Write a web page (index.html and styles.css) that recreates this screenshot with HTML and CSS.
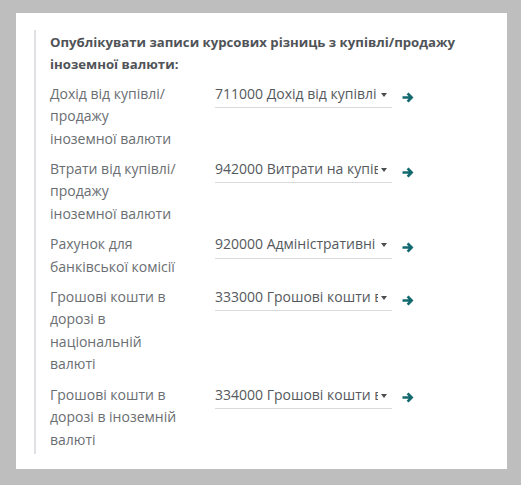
FILE: index.html
```html
<!DOCTYPE html>
<html lang="uk">
<head>
<meta charset="utf-8">
<link rel="stylesheet" href="styles.css">
</head>
<body>
<div class="panel">
  <div class="group">
    <div class="title">Опублікувати записи курсових різниць з купівлі/продажу<br>іноземної валюти:</div>
    <div class="rows">
      <div class="label">Дохід від купівлі/<br>продажу<br>іноземної валюти</div>
      <div class="field"><span class="val">711000 Дохід від купівлі</span><span class="caret"></span></div>
      <div class="link"><svg viewBox="0 0 12 11" width="12" height="11"><path d="M0.5 5.5H9.6M5.6 1.4L9.6 5.5L5.6 9.6" fill="none" stroke="currentColor" stroke-width="2.7" stroke-linejoin="miter" stroke-linecap="butt"/></svg></div>

      <div class="label">Втрати від купівлі/<br>продажу<br>іноземної валюти</div>
      <div class="field"><span class="val">942000 Витрати на купівлю</span><span class="caret"></span></div>
      <div class="link"><svg viewBox="0 0 12 11" width="12" height="11"><path d="M0.5 5.5H9.6M5.6 1.4L9.6 5.5L5.6 9.6" fill="none" stroke="currentColor" stroke-width="2.7" stroke-linejoin="miter" stroke-linecap="butt"/></svg></div>

      <div class="label">Рахунок для<br>банківської комісії</div>
      <div class="field"><span class="val">920000 Адміністративні витрати</span><span class="caret"></span></div>
      <div class="link"><svg viewBox="0 0 12 11" width="12" height="11"><path d="M0.5 5.5H9.6M5.6 1.4L9.6 5.5L5.6 9.6" fill="none" stroke="currentColor" stroke-width="2.7" stroke-linejoin="miter" stroke-linecap="butt"/></svg></div>

      <div class="label">Грошові кошти в<br>дорозі в<br>національній<br>валюті</div>
      <div class="field"><span class="val">333000 Грошові кошти в дорозі</span><span class="caret"></span></div>
      <div class="link"><svg viewBox="0 0 12 11" width="12" height="11"><path d="M0.5 5.5H9.6M5.6 1.4L9.6 5.5L5.6 9.6" fill="none" stroke="currentColor" stroke-width="2.7" stroke-linejoin="miter" stroke-linecap="butt"/></svg></div>

      <div class="label">Грошові кошти в<br>дорозі в іноземній<br>валюті</div>
      <div class="field"><span class="val">334000 Грошові кошти в дорозі</span><span class="caret"></span></div>
      <div class="link"><svg viewBox="0 0 12 11" width="12" height="11"><path d="M0.5 5.5H9.6M5.6 1.4L9.6 5.5L5.6 9.6" fill="none" stroke="currentColor" stroke-width="2.7" stroke-linejoin="miter" stroke-linecap="butt"/></svg></div>
    </div>
  </div>
</div>
</body>
</html>
```

FILE: styles.css
```css
html, body {
  margin: 0;
  padding: 0;
  background: #bebebe;
}
body {
  padding: 13px 14px 16px 16px;
  font-family: "Open Sans", "Noto Sans", sans-serif;
  font-size: 14px;
  line-height: 22.4px;
  color: #666a6e;
}
.panel {
  background: #ffffff;
  width: 491px;
  height: 456px;
  box-sizing: border-box;
  padding: 17px 0 0 18px;
}
.group {
  border-left: 2px solid #dfe1e4;
  padding: 1px 0 0 14px;
  height: 424px;
  box-sizing: border-box;
}
.title {
  font-size: 13.2px;
  font-weight: 700;
  color: #4f5357;
  margin-bottom: 7px;
}
.rows {
  display: grid;
  grid-template-columns: 165px 177px 22px;
  column-gap: 0;
  row-gap: 8px;
  align-items: start;
}
.label {
  color: #6a6e72;
}
.field {
  display: flex;
  align-items: center;
  border-bottom: 1px solid #d8dadd;
  padding-bottom: 2px;
  min-width: 0;
}
.val {
  flex: 1;
  min-width: 0;
  white-space: nowrap;
  overflow: hidden;
  color: #55595d;
}
.caret {
  width: 0;
  height: 0;
  border-left: 3.5px solid transparent;
  border-right: 3.5px solid transparent;
  border-top: 4px solid #4a4e52;
  margin: 2px 5px 0 3px;
}
.link {
  display: flex;
  align-items: center;
  justify-content: flex-end;
  height: 22.4px;
  color: #126a70;
  padding-top: 3px;
}
.link svg {
  display: block;
  flex: none;
}
```
